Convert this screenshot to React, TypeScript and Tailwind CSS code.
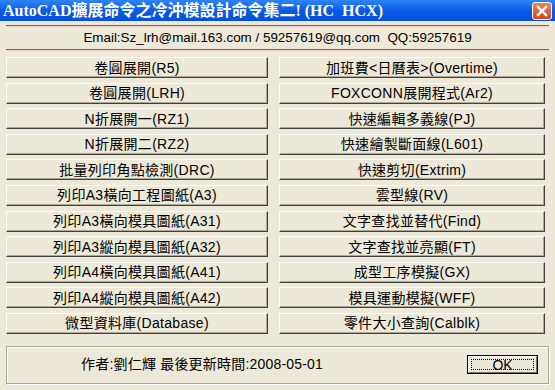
import React from "react";

const leftCommands = [
  "卷圓展開(R5)",
  "卷圓展開(LRH)",
  "N折展開一(RZ1)",
  "N折展開二(RZ2)",
  "批量列印角點檢測(DRC)",
  "列印A3橫向工程圖紙(A3)",
  "列印A3橫向模具圖紙(A31)",
  "列印A3縱向模具圖紙(A32)",
  "列印A4橫向模具圖紙(A41)",
  "列印A4縱向模具圖紙(A42)",
  "微型資料庫(Database)",
];

const rightCommands = [
  "加班費<日曆表>(Overtime)",
  "FOXCONN展開程式(Ar2)",
  "快速編輯多義線(PJ)",
  "快速繪製斷面線(L601)",
  "快速剪切(Extrim)",
  "雲型線(RV)",
  "文字查找並替代(Find)",
  "文字查找並亮顯(FT)",
  "成型工序模擬(GX)",
  "模具運動模擬(WFF)",
  "零件大小查詢(Calblk)",
];

const uiFont = {
  fontFamily: '"Liberation Sans", "Noto Sans CJK TC", sans-serif',
};

function CmdButton({ label }: { label: string }) {
  return (
    <button className="h-[21px] flex items-center justify-center bg-[#ece9d8] border-t border-l border-t-white border-l-white border-r border-b border-r-[#404040] border-b-[#404040] shadow-[inset_-1px_-1px_0_#aca899] text-[14px] tracking-[0.3px] leading-none text-black">
      {label}
    </button>
  );
}

function RedLine() {
  return (
    <div className="mx-[6px] h-[2px] border-t border-[#d03a3a] bg-[#f2d2c8]" />
  );
}

export default function App() {
  return (
    <div
      className="w-[555px] h-[390px] bg-[#ece9d8] overflow-hidden flex flex-col"
      style={uiFont}
    >
      {/* 標題列 */}
      <div className="h-[21px] flex items-center justify-between pl-[3px] pr-[3px] bg-gradient-to-b from-[#2f84f5] via-[#0a5ae8] to-[#0550d8]">
        <span
          className="text-white text-[16px] font-bold leading-none whitespace-nowrap"
          style={{
            fontFamily:
              '"Liberation Serif", "Noto Sans CJK TC", serif',
          }}
        >
          AutoCAD擴展命令之冷沖模設計命令集二! (HC&nbsp;&nbsp;HCX)
        </span>
        <div className="w-[20px] h-[18px] rounded-[3px] border border-white bg-gradient-to-b from-[#e8835f] to-[#d4451f] flex items-center justify-center">
          <svg width="12" height="12" viewBox="0 0 12 12">
            <path
              d="M2 2 L10 10 M10 2 L2 10"
              stroke="white"
              strokeWidth="2.4"
              strokeLinecap="square"
            />
          </svg>
        </div>
      </div>

      <div className="mt-[4px]">
        <RedLine />
      </div>
      <div className="h-[22px] flex items-center justify-center text-[13.4px] text-black whitespace-pre">
        {"Email:Sz_lrh@mail.163.com / 59257619@qq.com  QQ:59257619"}
      </div>
      <RedLine />

      {/* 命令按鈕 */}
      <div className="mt-[6px] pl-[6px] grid grid-cols-[262px_266px] gap-x-[11px] gap-y-[4.6px]">
        {leftCommands.map((cmd, i) => (
          <React.Fragment key={cmd}>
            <CmdButton label={cmd} />
            <CmdButton label={rightCommands[i]} />
          </React.Fragment>
        ))}
      </div>

      {/* 底部資訊 */}
      <div className="mt-[12px] mx-[6px] h-[38px] border border-[#aca899] shadow-[inset_1px_1px_0_#fff,1px_1px_0_#fff] flex items-center pl-[74px] pr-[10px]">
        <span className="text-[14px] tracking-[0.2px] text-black whitespace-nowrap">
          作者:劉仁輝 最後更新時間:2008-05-01
        </span>
        <button className="ml-auto w-[71px] h-[19px] border border-black bg-[#ece9d8] flex p-0">
          <div className="flex-1 border-t border-l border-white border-r border-b border-r-[#716f64] border-b-[#716f64] p-[2px] flex">
            <div className="flex-1 border border-dotted border-black flex items-center justify-center text-[14px] leading-none">
              OK
            </div>
          </div>
        </button>
      </div>
    </div>
  );
}
